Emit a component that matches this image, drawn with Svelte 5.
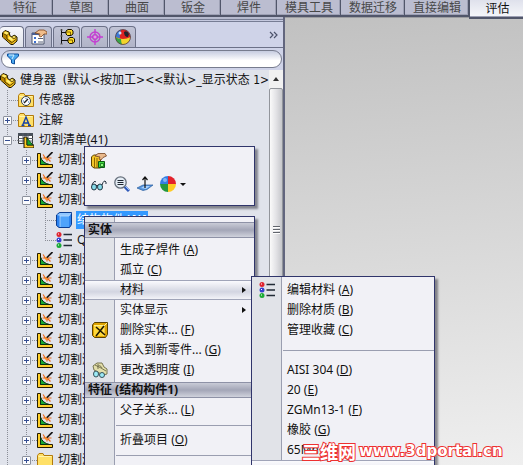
<script lang="ts">
  type TreeRow = {
    depth: number;
    icon: string;
    label: string;
    toggle?: 'plus' | 'minus';
    selected?: boolean;
    last?: boolean;
  };

  type MenuEntry = {
    kind: 'item' | 'title' | 'line';
    label?: string;
    key?: string;
    icon?: string;
    submenu?: boolean;
    active?: boolean;
  };

  const commandTabs = ['特征', '草图', '曲面', '钣金', '焊件', '模具工具', '数据迁移', '直接编辑', '评估'];
  const panelTabs = [
    { icon: 'part', label: '设计树' },
    { icon: 'props', label: '属性' },
    { icon: 'config', label: '配置' },
    { icon: 'target', label: '尺寸' },
    { icon: 'ball', label: '显示' }
  ];

  const cut = (toggle: 'plus' | 'minus' = 'plus'): TreeRow => ({
    depth: 2,
    icon: 'weld',
    label: '切割清单',
    toggle
  });

  const tree: TreeRow[] = [
    { depth: 0, icon: 'part', label: '健身器\u00a0\u00a0(默认<按加工><<默认>_显示状态 1>' },
    { depth: 1, icon: 'sensor', label: '传感器' },
    { depth: 1, icon: 'note', label: '注解', toggle: 'plus' },
    { depth: 1, icon: 'cutlist', label: '切割清单(41)', toggle: 'minus' },
    cut(),
    cut(),
    cut('minus'),
    { depth: 3, icon: 'cube', label: '结构构件1[1]', selected: true },
    { depth: 3, icon: 'material', label: 'Q235', last: true },
    cut(),
    cut(),
    cut(),
    cut(),
    cut(),
    cut(),
    cut(),
    cut(),
    cut(),
    cut(),
    { depth: 2, icon: 'folder', label: '切割清单', toggle: 'plus' }
  ];

  const bodyMenu: MenuEntry[] = [
    { kind: 'title', label: '实体' },
    { kind: 'item', label: '生成子焊件', key: 'A' },
    { kind: 'item', label: '孤立', key: 'C' },
    { kind: 'item', label: '材料', submenu: true, active: true },
    { kind: 'item', label: '实体显示', submenu: true },
    { kind: 'item', label: '删除实体...', key: 'F', icon: 'delete' },
    { kind: 'item', label: '插入到新零件...', key: 'G' },
    { kind: 'item', label: '更改透明度', key: 'I', icon: 'glass' },
    { kind: 'title', label: '特征 (结构构件1)' },
    { kind: 'item', label: '父子关系...', key: 'L' },
    { kind: 'line' },
    { kind: 'item', label: '折叠项目', key: 'O' },
    { kind: 'line' }
  ];

  const materialMenu: MenuEntry[] = [
    { kind: 'item', label: '编辑材料', key: 'A', icon: 'material' },
    { kind: 'item', label: '删除材质', key: 'B' },
    { kind: 'item', label: '管理收藏', key: 'C' },
    { kind: 'line' },
    { kind: 'item', label: 'AISI 304', key: 'D' },
    { kind: 'item', label: '20', key: 'E' },
    { kind: 'item', label: 'ZGMn13-1', key: 'F' },
    { kind: 'item', label: '橡胶', key: 'G' },
    { kind: 'item', label: '65Mn', key: 'H' }
  ];

  let currentTab = $state('评估');
  let currentPanel = $state('part');
  let filter = $state('');
</script>

{#snippet icon(name: string)}
  <svg class="icon" viewBox="0 0 16 16" aria-hidden="true">
    {#if name === 'part'}
      <path d="M.5 4 3 1.500l4 1.500 1 4 2 1 2-2 3 2v4l-4 3.500h-2L.5 8z" fill="#ffc81a" stroke="#1d1600" />
      <path d="M1 5l4 2v3l5 4v1L1 8z" fill="#b98300" />
      <path d="M1 4.500l4 2 3-3M5 6.500V10l5 3.500 4-3" fill="none" stroke="#2c2200" stroke-width=".8" />
      <path d="M2 4l2-1.500L6.500 4 5 5.500zM6 9l2-1.500 3 2.500-1 2z" fill="#fff07a" />
      <ellipse cx="12" cy="8" rx="2" ry="1.500" fill="#ffe766" stroke="#2c2200" stroke-width=".7" />
    {:else if name === 'props'}
      <path d="M1 4h12v11H1z" fill="#fff" stroke="#49536b" />
      <path d="M1 4h7v2H1z" fill="#4a5f92" />
      <path d="M3 8h2v2H3zM3 12h2v2H3z" fill="#3b6fd0" />
      <path d="M7 9.500h5M7 13h5" stroke="#59617a" />
      <path d="M4 4l4-3h5l3 2v2h-3l-3 3-2-1 1-2z" fill="#f0bd8b" stroke="#7e451c" stroke-width=".8" />
    {:else if name === 'config'}
      <path d="M2.500 0v15M2.500 3.500H8M2.500 11.500H9" fill="none" stroke="#111" />
      <path d="M1 1h3M1 7h3M1 15h3" stroke="#777" />
      <path d="M7 2l2-1.500h3.500L14 2v3l-2 1.500H8.500L7 5zM9 10l2-1.500h3L15.500 10v3l-2 1.500h-3L9 13z" fill="#ffdc27" stroke="#171200" />
      <path d="M8 3h3.500v3M10 11h3.500v3" fill="none" stroke="#806000" />
    {:else if name === 'target'}
      <g fill="none" stroke="#c43fd2" stroke-width="1.400">
        <circle cx="8" cy="8" r="5" />
        <path d="M8 0v16M0 8h16" />
      </g>
      <path d="M6 6h4v4H6z" fill="#e49ae9" stroke="#b52dc5" />
    {:else if name === 'ball'}
      <circle cx="8" cy="8" r="7.500" fill="#dd2222" />
      <path d="M.5 8A7.500 7.500 0 0 1 6 .8Q4 5 5 9.500z" fill="#3c7ad6" />
      <path d="M.5 8Q8 12 15.500 8A7.500 7.500 0 0 1 8 15.500 7.500 7.500 0 0 1 .5 8z" fill="#f4d42b" />
      <path d="M.5 8Q3 10 6 10q0 3 1 5.400A7.500 7.500 0 0 1 .5 8z" fill="#39a447" />
      <path d="M9 3q3-2 5 2l-1 3q-4 0-4-5z" fill="#20232c" />
      <circle cx="5" cy="4" r="1.500" fill="#c9e4ff" />
      <circle cx="8" cy="8" r="7.500" fill="none" stroke="#443b45" stroke-width=".7" />
    {:else if name === 'sphere'}
      <path d="M8 8V0A8 8 0 0 0 0 8z" fill="#347ee2" />
      <path d="M8 8h8A8 8 0 0 0 8 0z" fill="#e3222c" />
      <path d="M8 8v8a8 8 0 0 0 8-8z" fill="#ffcb24" />
      <path d="M8 8H0a8 8 0 0 0 8 8z" fill="#25983e" />
      <circle cx="5" cy="4" r="2" fill="#80b5f6" />
    {:else if name === 'sensor' || name === 'note' || name === 'folder'}
      <path d="M.5 3.500 2 1.500h4l1 2h8.500v11H.5z" fill="#ffe067" stroke="#b27a0b" />
      <path d="M1.500 4.500h13" stroke="#fff4ad" />
      {#if name === 'sensor'}
        <circle cx="8" cy="9" r="4.500" fill="#fff" stroke="#333c48" />
        <path d="M6 11l4-4" stroke="#222" stroke-width="1.500" />
        <path d="M5 9h1M8 6v1M10 10h1" stroke="#2772c9" />
      {:else if name === 'note'}
        <path d="M4.500 13.500 8 5l3.500 8.500M6 11h4M3.500 13.500h3M10 13.500h3" fill="none" stroke="#1540a8" stroke-width="1.400" />
      {/if}
    {:else if name === 'cutlist'}
      <path d="M.5 1.500h14v10H.5z" fill="#fff" stroke="#333" />
      <path d="M0 1h15v3H0z" fill="#48505a" />
      <path d="M0 6.500h15M0 9h15M5 1v11M10 1v11" stroke="#5a606a" />
      <path d="M6 5h3v8h7v3H6z" fill="#ffca20" stroke="#111" />
      <path d="M9 6v7h6z" fill="#16a42f" stroke="#0a2a10" stroke-width=".7" />
    {:else if name === 'weld'}
      <path d="M.5 1.500h3v11h12v3H.5z" fill="#ffd029" stroke="#241a00" />
      <path d="M3.500 5q2 6 9 7.500h-9z" fill="#19a834" stroke="#092d0d" />
      <path d="M6 2.500l2 3M5.500 6h3M10 9.500v-3M13.500 9.500 11 7M14.500 6h-4" stroke="#f06a18" stroke-width="1.200" />
      <path d="M15.500 0 9 6.500" stroke="#161616" stroke-width="1.700" />
      <circle cx="9" cy="6.500" r="1.300" fill="#ff8b1f" />
    {:else if name === 'cube'}
      <path d="M.5 3l3-2.500h12v12l-2 3H3l-2.500-2z" fill="#2c83ef" stroke="#0b3d92" />
      <path d="M1 3l3-2h11l-2 3H4z" fill="#91c7ff" />
      <path d="M4 4h9v11H4z" fill="#4fa3fb" />
      <path d="M4 15V4h9M13 4l2-3" fill="none" stroke="#c7e4ff" stroke-width=".7" />
    {:else if name === 'material'}
      <path d="M7.500 2.500H16M7.500 8H16M7.500 13.500H16" stroke="#222b35" stroke-width="1.600" />
      <circle cx="3" cy="2.500" r="2.500" fill="#df2430" />
      <circle cx="3" cy="8" r="2.500" fill="#3540d0" />
      <circle cx="3" cy="13.500" r="2.500" fill="#1bab36" />
      <path d="M2 2h1M2 7.500h1M2 13h1" stroke="#fff" />
    {:else if name === 'feature'}
      <path d="M.5 4l2-2h6l1 2v11H3l-2.500-2z" fill="#f4c629" stroke="#5b4300" />
      <path d="M3.500 15V4.500M6 15V5" stroke="#8e6700" />
      <path d="M4 3l3-2.500h7L15.500 3 12 4.500 10 7 8 6l1-2z" fill="#e9b98c" stroke="#74421f" stroke-width=".8" />
      <path d="M7.500 8.500h6v6h-6z" fill="#3fda3e" stroke="#0b5913" />
      <path d="M9.500 10.500h3v3h-3z" fill="#8aff76" stroke="#0b5913" stroke-width=".7" />
    {:else if name === 'glasses'}
      <g fill="#86dbe9" stroke="#233744">
        <ellipse cx="3" cy="11" rx="2.500" ry="3" />
        <ellipse cx="9" cy="11" rx="2.500" ry="3" />
      </g>
      <path d="M5 10q1-2 2 0M1 9Q3 4 5 6M11 9q2-6 4-3v2" fill="none" stroke="#263340" />
    {:else if name === 'zoom'}
      <path d="M10 10l5 5" stroke="#315bb9" stroke-width="3" />
      <path d="M11 10l4 4" stroke="#9ac1ff" />
      <circle cx="6.500" cy="6.500" r="5.700" fill="#e5edf5" stroke="#68717d" stroke-width="1.300" />
      <path d="M3.500 4.500h6M3.500 6.500h6M3.500 8.500h6" stroke="#202832" />
    {:else if name === 'normal'}
      <path d="M0 12l6-3h10l-6 4.500-4 1z" fill="#5794dd" stroke="#285d9d" stroke-width=".7" />
      <path d="M4 12l3-2h6l-4 3z" fill="#a5d0ff" />
      <path d="M8 12V1M5.500 4 8 1l2.500 3" fill="none" stroke="#111" stroke-width="1.200" />
    {:else if name === 'delete'}
      <path d="M.5 3l2-2.500h13v12l-2 3H2.500l-2-2z" fill="#e0a400" stroke="#5b4200" />
      <path d="M2 4h10v10H2z" fill="#ffd93a" />
      <path d="M12 4l3-3M2 3.500h10V14" stroke="#fff08f" fill="none" />
      <path d="M4 5l9 8M12 4l-8 10" stroke="#201900" stroke-width="1.600" />
    {:else if name === 'glass'}
      <path d="M1 4l4-3h5l2 4 3 2v5l-4 1L2 8z" fill="#e3dfab" stroke="#777550" />
      <path d="M3 3l6 3M6 2v5M9 6l5 3M5 5q3-3 5 1" stroke="#777550" fill="none" />
      <ellipse cx="4" cy="12" rx="2.500" ry="3" fill="#9ceaf5" stroke="#36515a" />
      <ellipse cx="10" cy="13" rx="2.500" ry="2.500" fill="#9ceaf5" stroke="#36515a" />
    {/if}
  </svg>
{/snippet}

{#snippet menuList(entries: MenuEntry[])}
  {#each entries as entry}
    {#if entry.kind === 'title'}
      <h2 class="menu-title">{entry.label}</h2>
    {:else if entry.kind === 'line'}
      <hr />
    {:else}
      <button type="button" class="menu-item" class:active={entry.active} role="menuitem">
        <span class="gutter">
          {#if entry.icon}{@render icon(entry.icon)}{/if}
        </span>
        <span class="menu-label">
          {entry.label}
          {#if entry.key}(<u>{entry.key}</u>){/if}
        </span>
        {#if entry.submenu}<span class="arrow-right"></span>{/if}
      </button>
    {/if}
  {/each}
{/snippet}

<main class="app">
  <nav class="commands" aria-label="命令">
    {#each commandTabs as tab}
      <button type="button" class:current={tab === currentTab} onclick={() => (currentTab = tab)}>{tab}</button>
    {/each}
  </nav>

  <div class="workspace">
    <aside class="panel">
      <div class="panel-tabs">
        {#each panelTabs as tab}
          <button
            type="button"
            class="panel-tab"
            class:current={tab.icon === currentPanel}
            aria-label={tab.label}
            onclick={() => (currentPanel = tab.icon)}
          >
            {@render icon(tab.icon)}
          </button>
        {/each}
        <button type="button" class="more" aria-label="更多">
          <svg viewBox="0 0 10 8" aria-hidden="true">
            <path d="M1 1l3 3-3 3M5 1l3 3-3 3" fill="none" stroke="#4c536b" stroke-width="1.200" />
          </svg>
        </button>
      </div>

      <label class="filter">
        <svg viewBox="0 0 12 12" aria-hidden="true">
          <path d="M.5 1h11v2L7.500 7v4l-3-1V7L.5 3z" fill="#4aa8ee" stroke="#0c4e9c" />
          <path d="M2 2h5l-2 4" fill="none" stroke="#d3f1ff" />
        </svg>
        <input type="text" aria-label="过滤器" bind:value={filter} />
      </label>

      <div class="tree-area">
        <ul class="tree">
          {#each tree as row}
            <li class="row depth-{row.depth}" class:last={row.last}>
              {#if row.depth > 1}<span class="guide"></span>{/if}
              {#if row.depth > 2}<span class="guide"></span>{/if}
              {#if row.depth > 0}
                <span class="branch">
                  {#if row.toggle}
                    <button type="button" class="toggle {row.toggle}" aria-label="展开或折叠"></button>
                  {/if}
                </span>
              {/if}
              {@render icon(row.icon)}
              <span class="label" class:selected={row.selected}>{row.label}</span>
            </li>
          {/each}
        </ul>
        <div class="scrollbar">
          <button type="button" class="scroll-up" aria-label="向上滚动"><span></span></button>
          <div class="thumb"><span class="grip"></span></div>
        </div>
      </div>
    </aside>
    <section class="viewport" aria-label="图形区域"></section>
  </div>

  <div class="popup toolbar" role="toolbar" aria-label="关联工具栏">
    <div class="tools">
      <button type="button" aria-label="编辑特征">{@render icon('feature')}</button>
    </div>
    <div class="tools">
      <button type="button" aria-label="隐藏">{@render icon('glasses')}</button>
      <button type="button" aria-label="放大所选范围">{@render icon('zoom')}</button>
      <button type="button" aria-label="正视于">{@render icon('normal')}</button>
      <button type="button" aria-label="外观">{@render icon('sphere')}<span class="arrow-down"></span></button>
    </div>
  </div>

  <div class="popup menu body-menu" role="menu">{@render menuList(bodyMenu)}</div>
  <div class="popup menu material-menu" role="menu">
    {@render menuList(materialMenu)}
    <div class="menu-foot"></div>
  </div>

  <p class="watermark"><span>三维网</span>www.3dportal.cn</p>
</main>

<style>
  :global(body) {
    margin: 0;
    font-family: 'Noto Sans', 'Noto Sans CJK SC', sans-serif;
    font-size: 12px;
    color: #111;
  }

  .app {
    position: relative;
    height: 100vh;
    overflow: hidden;
    display: flex;
    flex-direction: column;
  }

  button {
    margin: 0;
    padding: 0;
    border: 0;
    background: none;
    font: inherit;
    color: inherit;
  }

  .icon {
    display: block;
    flex: none;
    width: 16px;
    height: 16px;
  }

  .commands {
    display: flex;
    flex: none;
    height: 17px;
    margin-left: -3px;
    background: #bbbdd0;
    box-shadow: inset 0 -2px #51566a;
  }

  .commands button {
    box-sizing: border-box;
    flex: none;
    min-width: 56px;
    height: 17px;
    padding: 0 7px 0 8px;
    line-height: 14px;
    color: #484848;
    border-right: 1px solid #51566a;
    border-bottom: 2px solid #51566a;
    box-shadow: inset -1px -1px #9da0b4;
  }

  .commands .current {
    position: relative;
    height: 19px;
    color: #111;
    background: linear-gradient(#dfe1ec, #f6f7fa);
    border-left: 1px solid #51566a;
  }

  .workspace {
    flex: 1;
    min-height: 0;
    display: flex;
  }

  .panel {
    box-sizing: border-box;
    flex: none;
    width: 285px;
    display: flex;
    flex-direction: column;
    padding-top: 5px;
    border-right: 2px solid #62667e;
    background: linear-gradient(#b6bace 0 2px, #777d94 2px 3px, #c5c9df 3px 4px, #777d94 4px 5px, #cfd3e8 5px);
  }

  .panel-tabs {
    display: flex;
    align-items: flex-end;
    flex: none;
    height: 25px;
    gap: 1px;
    border-bottom: 1px solid #6c7188;
  }

  .panel-tab {
    box-sizing: border-box;
    display: grid;
    place-items: center;
    width: 27px;
    height: 21px;
    border: 1px solid #6c7188;
    border-bottom: 0;
    border-radius: 4px 4px 0 0;
    background: linear-gradient(#c0c3d5, #b1b4c8);
  }

  .panel-tab.current {
    width: 24px;
    border-left: 0;
    padding-right: 4px;
    background: linear-gradient(#f6f7fb, #e0e3eb);
  }

  .more {
    margin: 0 4px 5px auto;
    width: 10px;
    height: 14px;
  }

  .more svg {
    display: block;
    width: 10px;
    height: 8px;
  }

  .filter {
    box-sizing: border-box;
    display: flex;
    align-items: center;
    flex: none;
    gap: 4px;
    height: 18px;
    margin: 2px 1px;
    padding: 0 5px;
    border: 1px solid #777c8e;
    border-radius: 9px;
    background: linear-gradient(#c6cce0, #fff 60%);
  }

  .filter svg {
    width: 12px;
    height: 12px;
  }

  .filter input {
    flex: 1;
    min-width: 0;
    padding: 0;
    border: 0;
    outline: 0;
    background: none;
    font: inherit;
  }

  .tree-area {
    flex: 1;
    min-height: 0;
    display: flex;
    background: #e0e3eb;
  }

  .tree {
    flex: 1;
    min-width: 0;
    margin: 0;
    padding: 0;
    overflow: hidden;
    list-style: none;
  }

  .row {
    display: flex;
    align-items: center;
    height: 20px;
    white-space: nowrap;
  }

  .label {
    margin-left: 4px;
    padding: 0 1px;
    line-height: 18px;
  }

  .depth-0 .label {
    font-family: 'DejaVu Sans Condensed', 'Noto Sans CJK SC', sans-serif;
    margin-left: 3px;
  }

  .selected {
    background: #3399ff;
    color: #fff;
  }

  .guide,
  .branch {
    box-sizing: border-box;
    flex: none;
    width: 19px;
    height: 20px;
    background: repeating-linear-gradient(#8a8d96 0 1px, transparent 1px 2px) 7px 0 / 1px 100% no-repeat;
  }

  .branch {
    display: flex;
    align-items: center;
    padding-left: 3px;
    width: 18px;
    background:
      repeating-linear-gradient(#8a8d96 0 1px, transparent 1px 2px) 7px 0 / 1px 100% no-repeat,
      repeating-linear-gradient(90deg, #8a8d96 0 1px, transparent 1px 2px) 7px 10px / 11px 1px no-repeat;
  }

  .last .branch {
    background-size: 1px 10px, 11px 1px;
  }

  .toggle {
    box-sizing: border-box;
    width: 9px;
    height: 9px;
    border: 1px solid #8d929d;
    border-radius: 1px;
    background: linear-gradient(#344d91, #344d91) center / 5px 1px no-repeat #fafbfd;
  }

  .toggle.plus {
    background:
      linear-gradient(#344d91, #344d91) center / 5px 1px no-repeat,
      linear-gradient(#344d91, #344d91) center / 1px 5px no-repeat #fafbfd;
  }

  .scrollbar {
    flex: none;
    width: 14px;
    display: flex;
    flex-direction: column;
    background: #f1f1f1;
  }

  .scroll-up {
    display: grid;
    place-items: center;
    flex: none;
    height: 18px;
  }

  .scroll-up span {
    border: 3px solid transparent;
    border-top: 0;
    border-bottom: 4px solid #333;
  }

  .thumb {
    box-sizing: border-box;
    display: grid;
    place-items: center;
    height: 72%;
    border: 1px solid #92959b;
    border-radius: 2px;
    background: linear-gradient(90deg, #fafafa, #e3e3e6 50%, #c6c7cb);
  }

  .grip {
    width: 7px;
    height: 8px;
    background: repeating-linear-gradient(#61656d 0 1px, #fff 1px 2px, transparent 2px 3px);
  }

  .viewport {
    flex: 1;
    border-top: 1px solid #9b9ca0;
    background: linear-gradient(176deg, #c1c1c1, #efefef);
  }

  .popup {
    position: absolute;
    box-sizing: border-box;
    border: 1px solid #30356b;
    background: #f1f1f6;
    box-shadow: 3px 3px 2px rgba(40, 40, 50, 0.5);
  }

  .toolbar {
    left: 84px;
    top: 146px;
    width: 171px;
    height: 60px;
    padding: 6px 6px;
  }

  .tools {
    display: flex;
    gap: 7px;
    margin-bottom: 7px;
  }

  .tools button {
    display: flex;
    align-items: center;
    gap: 4px;
  }

  .arrow-down {
    border: 3px solid transparent;
    border-bottom: 0;
    border-top: 3px solid #111;
  }

  .menu {
    background: linear-gradient(90deg, #e1e3e8 29px, #9a9eb0 29px 30px, #f1f1f6 30px);
  }

  .body-menu {
    left: 84px;
    top: 216px;
    width: 171px;
    padding: 5px 0 30px;
  }

  .material-menu {
    left: 251px;
    top: 276px;
    width: 184px;
    padding: 3px 0 30px;
  }

  .menu-title {
    box-sizing: border-box;
    height: 16px;
    margin: 0;
    padding-left: 3px;
    font-size: 12px;
    line-height: 14px;
    border-top: 1px solid #8e92a6;
    border-bottom: 1px solid #8e92a6;
    background: linear-gradient(#c9cbd6, #a3a6b7 50%, #d0d2dc);
  }

  .menu-title + .menu-item {
    margin-top: 2px;
  }

  .menu-item:has(+ .menu-title) {
    margin-bottom: 2px;
  }

  .menu-item {
    box-sizing: border-box;
    display: flex;
    align-items: center;
    width: 100%;
    height: 20px;
    text-align: left;
    white-space: nowrap;
  }

  .menu-item.active {
    border-top: 1px solid #a0a4b8;
    border-bottom: 1px solid #a0a4b8;
    background: linear-gradient(#fafafd, #d3d5e1 60%, #f3f3f8);
  }

  .menu-foot {
    height: 20px;
    border-top: 1px solid #a0a4b8;
    background: linear-gradient(#fafafd, #d3d5e1);
  }

  .gutter {
    flex: none;
    width: 23px;
    padding-left: 7px;
  }

  .menu-label {
    flex: 1;
    padding-left: 5px;
    line-height: 16px;
  }

  .arrow-right {
    margin-right: 8px;
    border: 3px solid transparent;
    border-right: 0;
    border-left: 4px solid #111;
  }

  hr {
    height: 1px;
    margin: 5px 0 4px 31px;
    border: 0;
    background: #9a9eb0;
  }

  .material-menu hr {
    margin: 10px 0 9px 31px;
  }

  .watermark {
    position: absolute;
    left: 302px;
    top: 440px;
    display: flex;
    align-items: center;
    gap: 3px;
    margin: 0;
    height: 22px;
    font: bold 15px 'DejaVu Sans', sans-serif;
    color: #fff;
    -webkit-text-stroke: 2px #ee3030;
    paint-order: stroke fill;
    white-space: nowrap;
  }

  .watermark span {
    font: bold 18px 'Noto Sans CJK SC', sans-serif;
  }
</style>
